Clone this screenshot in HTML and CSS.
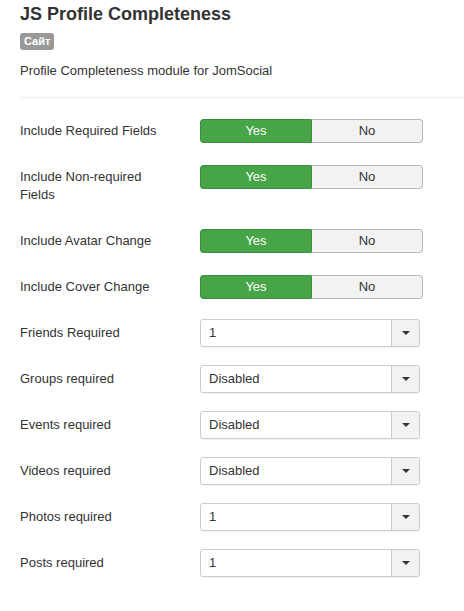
FILE: index.html
```html
<!DOCTYPE html>
<html>
<head>
<meta charset="utf-8">
<link rel="stylesheet" href="styles.css">
</head>
<body>
<div class="page">
  <h1 class="title">JS Profile Completeness</h1>
  <span class="badge">Сайт</span>
  <p class="desc">Profile Completeness module for JomSocial</p>
  <hr class="sep">
  <div class="form">
    <div class="row">
      <div class="label">Include Required Fields</div>
      <div class="toggle"><span class="opt yes">Yes</span><span class="opt no">No</span></div>
    </div>
    <div class="row">
      <div class="label">Include Non-required Fields</div>
      <div class="toggle"><span class="opt yes">Yes</span><span class="opt no">No</span></div>
    </div>
    <div class="row">
      <div class="label">Include Avatar Change</div>
      <div class="toggle"><span class="opt yes">Yes</span><span class="opt no">No</span></div>
    </div>
    <div class="row">
      <div class="label">Include Cover Change</div>
      <div class="toggle"><span class="opt yes">Yes</span><span class="opt no">No</span></div>
    </div>
    <div class="row">
      <div class="label">Friends Required</div>
      <div class="select"><span class="value">1</span><span class="arrow"><i class="caret"></i></span></div>
    </div>
    <div class="row">
      <div class="label">Groups required</div>
      <div class="select"><span class="value">Disabled</span><span class="arrow"><i class="caret"></i></span></div>
    </div>
    <div class="row">
      <div class="label">Events required</div>
      <div class="select"><span class="value">Disabled</span><span class="arrow"><i class="caret"></i></span></div>
    </div>
    <div class="row">
      <div class="label">Videos required</div>
      <div class="select"><span class="value">Disabled</span><span class="arrow"><i class="caret"></i></span></div>
    </div>
    <div class="row">
      <div class="label">Photos required</div>
      <div class="select"><span class="value">1</span><span class="arrow"><i class="caret"></i></span></div>
    </div>
    <div class="row">
      <div class="label">Posts required</div>
      <div class="select"><span class="value">1</span><span class="arrow"><i class="caret"></i></span></div>
    </div>
  </div>
</div>
</body>
</html>
```

FILE: styles.css
```css
html, body {
  margin: 0;
  padding: 0;
  background: #fff;
}
body {
  font-family: "Liberation Sans", Arial, sans-serif;
  font-size: 13px;
  line-height: 18px;
  color: #333;
}
.page {
  padding: 4px 0 0 20px;
}
.title {
  margin: 0;
  font-size: 18px;
  line-height: 20px;
  font-weight: bold;
  color: #333;
}
.badge {
  display: inline-block;
  margin-top: 9px;
  padding: 0 4px;
  height: 17px;
  line-height: 17px;
  font-size: 11px;
  font-weight: bold;
  color: #fff;
  background: #999;
  border-radius: 3px;
  vertical-align: top;
}
.desc {
  margin: 12px 0 0;
  line-height: 18px;
}
.sep {
  margin: 17px 0 0;
  border: 0;
  border-top: 1px solid #eee;
  height: 0;
}
.form {
  padding-top: 19px;
}
.row {
  display: flex;
  align-items: flex-start;
  margin-bottom: 18px;
}
.label {
  width: 150px;
  margin-right: 30px;
  padding: 5px 0;
  line-height: 18px;
}
.toggle {
  display: flex;
  margin-top: 2px;
  width: 223px;
  height: 24px;
  box-sizing: border-box;
}
.opt {
  flex: 1;
  text-align: center;
  line-height: 22px;
  box-sizing: border-box;
  border: 1px solid;
}
.yes {
  background: #46a546;
  border-color: #3c8d3c;
  color: #fff;
  border-radius: 4px 0 0 4px;
  border-right: 0;
}
.no {
  background: #f2f2f2;
  border-color: #b8b8b8;
  color: #333;
  border-radius: 0 4px 4px 0;
  border-left: 1px solid #3c8d3c;
}
.select {
  display: flex;
  width: 220px;
  height: 28px;
  box-sizing: border-box;
  border: 1px solid #ccc;
  border-radius: 3px;
  background: #fff;
  box-shadow: 0 1px 2px rgba(0,0,0,0.06);
  overflow: hidden;
}
.value {
  flex: 1;
  padding-left: 8px;
  line-height: 26px;
}
.arrow {
  width: 27px;
  border-left: 1px solid #ccc;
  background: #f2f2f2;
  display: flex;
  align-items: center;
  justify-content: center;
}
.caret {
  width: 0;
  height: 0;
  border-left: 4px solid transparent;
  border-right: 4px solid transparent;
  border-top: 4px solid #333;
}
```
